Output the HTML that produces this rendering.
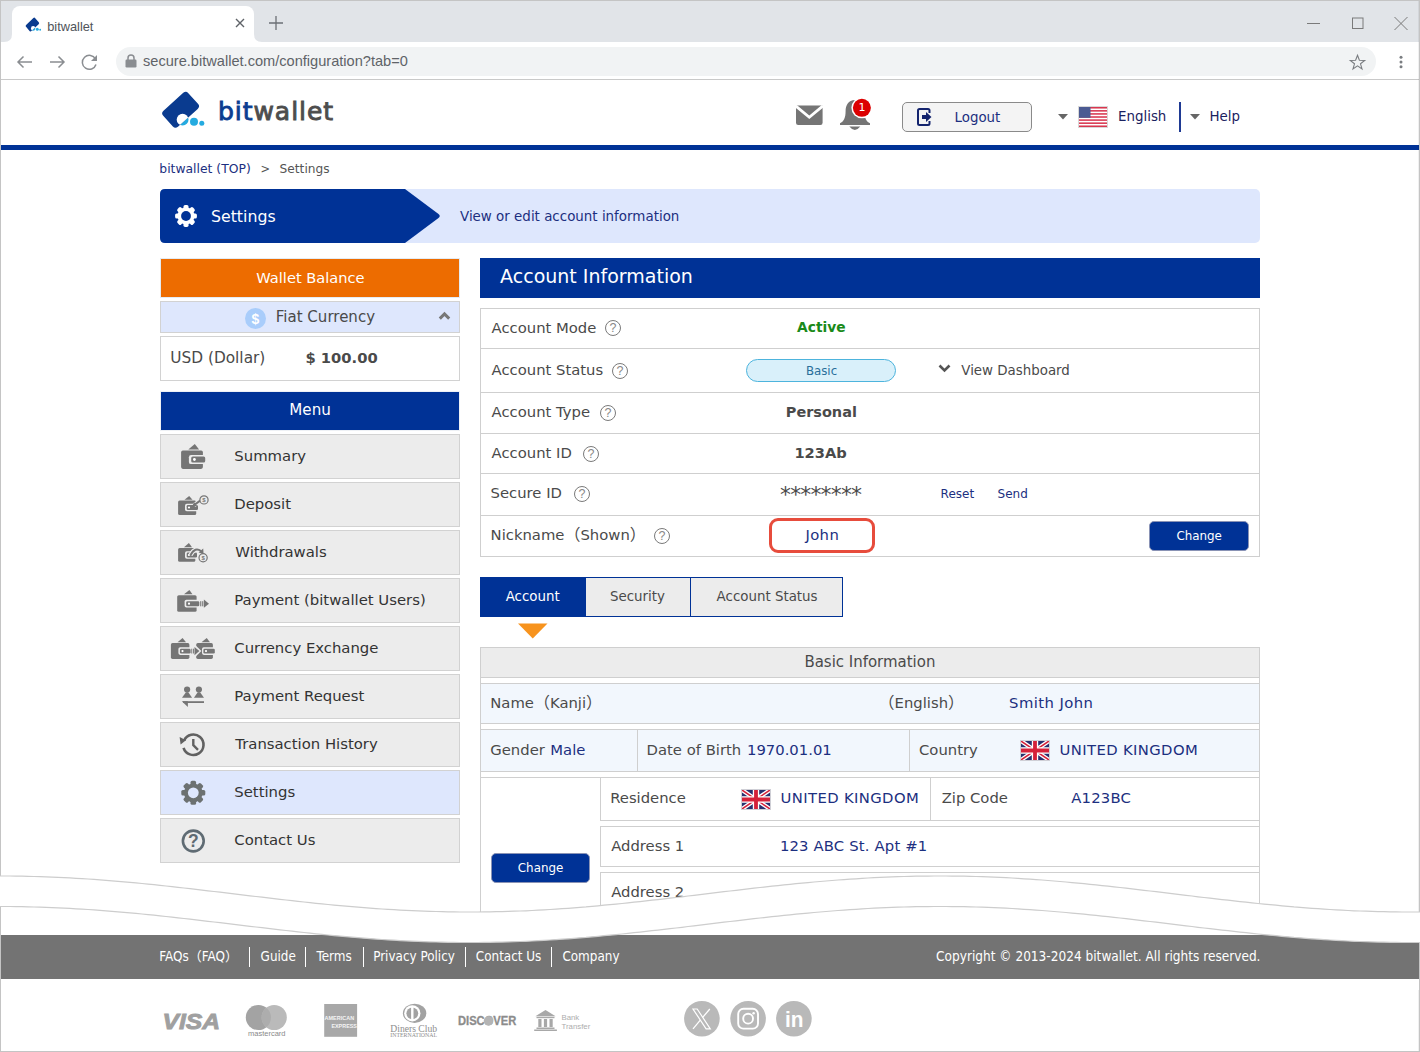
<!DOCTYPE html>
<html lang="en">
<head>
<meta charset="utf-8">
<title>bitwallet</title>
<style>
*{box-sizing:border-box;margin:0;padding:0}
html,body{width:1420px;height:1052px;overflow:hidden;background:#fff}
body{position:relative;font-family:"DejaVu Sans","Liberation Sans","Noto Sans CJK JP",sans-serif;color:#4a4a4a;font-size:16px}
.a{position:absolute}
.t{position:absolute;white-space:nowrap;line-height:20px;height:20px}
.ui{font-family:"Liberation Sans","Noto Sans CJK JP",sans-serif}
.navy{color:#1c2f80}
.blue{background:#003296}
svg{position:absolute;display:block;overflow:visible}
/* chrome frame */
#tabbar{left:0;top:0;width:1420px;height:42px;background:#e1e4e8}
#tab{left:12px;top:6px;width:242px;height:36px;background:#fff;border-radius:8px 8px 0 0}
#toolbar{left:0;top:42px;width:1420px;height:38px;background:#fff;border-bottom:1px solid #c9c9c9}
#pill{left:116px;top:47px;width:1260px;height:29px;border-radius:15px;background:#f1f3f4}
#frame{left:0;top:0;width:1420px;height:1052px;border:1px solid #c4c4c4;z-index:4;pointer-events:none;box-shadow:inset -1px 0 0 rgba(0,0,0,0.06)}
/* header */
#hline{left:1px;top:145px;width:1418px;height:5px}
#logout{left:902px;top:102px;width:130px;height:30px;border:1px solid #8a8a8a;border-radius:5px;background:#f4f4f4}
/* banner */
#banner{left:160px;top:189px;width:1100px;height:54px;background:#dee7fd;border-radius:5px}
/* sidebar */
.box{position:absolute;left:160px;width:300px;border:1px solid #d2d2d2}
.mi{position:absolute;left:160px;width:300px;height:45px;border:1px solid #d2d2d2;background:#ececec}
.mt{color:#333}
.fw{font-family:"Noto Sans CJK JP",sans-serif;font-size:16px;line-height:0}
/* main */
.row{position:absolute;left:480px;width:780px;border:1px solid #cfcfcf}
.lbl{font-size:14.8px;color:#4a4a4a}
.val{font-size:15.2px;color:#1c2f80}
.btn{position:absolute;background:#003296;border:1px solid #8a93b5;border-radius:5px;color:#fff;font-size:13.6px;text-align:center}
.q{position:absolute;width:16px;height:16px;border:1px solid #7a7a7a;border-radius:50%;font-size:12.5px;line-height:14px;text-align:center;color:#888;font-family:"Liberation Sans",sans-serif}
</style>
</head>
<body>
<!-- ===== browser chrome ===== -->
<div class="a" id="tabbar"></div>
<div class="a" id="tab"></div>
<svg style="left:4px;top:34px" width="260" height="8" viewBox="0 0 260 8"><path d="M0 8 Q8 8 8 0 L8 8 Z M250 0 Q250 8 258 8 L250 8 Z" fill="#fff"/></svg>
<div class="a" id="toolbar"></div>
<div class="a" id="pill"></div>
<!-- favicon -->
<svg style="left:22.700px;top:15.300px" width="22" height="19.300" viewBox="0 0 60 50" preserveAspectRatio="none"><defs><clipPath id="lc2"><rect x="-16.900" y="-10.800" width="33.800" height="21.600" rx="3.600" transform="translate(25.600 24.800) rotate(-42)"/></clipPath></defs><circle cx="27.600" cy="34.700" r="5.900" fill="#25abe0"/><rect x="-16.900" y="-10.800" width="33.800" height="21.600" rx="3.600" transform="translate(25.600 24.800) rotate(-42)" fill="#0a3b8f"/><circle cx="27.600" cy="34.700" r="5.900" fill="#fff" clip-path="url(#lc2)"/><circle cx="39" cy="36.800" r="4" fill="#25abe0"/><circle cx="46.800" cy="38.300" r="2.500" fill="#25abe0"/></svg>
<span id="t1" class="t ui" style="left:47.2px;top:17.0px;font-size:12.81px;color:#50545a">bitwallet</span>
<svg style="left:235px;top:18px" width="10" height="10" viewBox="0 0 10 10"><path d="M1 1 L9 9 M9 1 L1 9" stroke="#5f6368" stroke-width="1.4" fill="none"/></svg>
<svg style="left:269px;top:16px" width="14" height="14" viewBox="0 0 14 14"><path d="M7 0 V14 M0 7 H14" stroke="#6b6f75" stroke-width="1.3" fill="none"/></svg>
<!-- window controls -->
<svg style="left:1307px;top:16px" width="102" height="15" viewBox="0 0 102 15"><path d="M0 7.5 H13" stroke="#7a7a7a" stroke-width="1" fill="none"/><rect x="45.5" y="2" width="10.5" height="10.5" stroke="#7a7a7a" stroke-width="1" fill="none"/><path d="M87.5 1 L100.5 14 M100.5 1 L87.5 14" stroke="#7a7a7a" stroke-width="1" fill="none"/></svg>
<!-- nav buttons -->
<svg style="left:16px;top:54px" width="84" height="16" viewBox="0 0 84 16"><g stroke="#8a8d91" stroke-width="1.5" fill="none"><path d="M16 8 H2 M7.5 2.5 L2 8 L7.5 13.5"/><path d="M34 8 H48 M42.500 2.500 L48 8 L42.500 13.500"/><path d="M79.500 5 A7 7 0 1 0 80 10.500"/></g><path d="M81 1 V7 H75 Z" fill="#8a8d91"/></svg>
<!-- lock -->
<svg style="left:125px;top:54px" width="12" height="14" viewBox="0 0 12 14"><rect x="0.500" y="5.500" width="11" height="8" rx="1.200" fill="#8a8d91"/><path d="M3 6 V4 A3 3 0 0 1 9 4 V6" stroke="#8a8d91" stroke-width="1.500" fill="none"/></svg>
<span id="t2" class="t ui" style="left:143.0px;top:51.0px;font-size:14.60px;color:#5f6368">secure.bitwallet.com/configuration?tab=0</span>
<!-- star + dots -->
<svg style="left:1349px;top:54px" width="17" height="16" viewBox="0 0 17 16"><path d="M8.500 1.300 L10.400 6.300 L15.700 6.500 L11.500 9.800 L13 14.900 L8.500 11.900 L4 14.900 L5.500 9.800 L1.300 6.500 L6.600 6.300 Z" stroke="#7a7d81" stroke-width="1.100" fill="none" stroke-linejoin="miter"/></svg>
<svg style="left:1399px;top:55px" width="4" height="14" viewBox="0 0 4 14"><circle cx="2" cy="2.300" r="1.500" fill="#7a7d81"/><circle cx="2" cy="7" r="1.500" fill="#7a7d81"/><circle cx="2" cy="11.700" r="1.500" fill="#7a7d81"/></svg>

<!-- ===== site header ===== -->
<svg style="left:155px;top:85px" width="60" height="50" viewBox="0 0 60 50"><defs><clipPath id="lc1"><rect x="-16.900" y="-10.800" width="33.800" height="21.600" rx="3.600" transform="translate(25.600 24.800) rotate(-42)"/></clipPath></defs><circle cx="27.600" cy="34.700" r="5.900" fill="#25abe0"/><rect x="-16.900" y="-10.800" width="33.800" height="21.600" rx="3.600" transform="translate(25.600 24.800) rotate(-42)" fill="#0a3b8f"/><circle cx="27.600" cy="34.700" r="5.900" fill="#fff" clip-path="url(#lc1)"/><circle cx="39" cy="36.800" r="4" fill="#25abe0"/><circle cx="46.800" cy="38.300" r="2.500" fill="#25abe0"/></svg>
<span id="t3" class="t ui" style="left:218.0px;top:97.0px;height:30px;line-height:30px;font-size:25px;font-family:'DejaVu Sans',sans-serif;-webkit-text-stroke-width:0.9px;letter-spacing:0.95px;color:#4d4d4d"><span style="color:#0b3d91">bit</span>wallet</span>
<!-- mail -->
<svg style="left:790px;top:92px" width="90" height="45" viewBox="790 92 90 45"><path d="M796 105.600 H822.600 V122.800 Q822.600 125 820.400 125 H798.200 Q796 125 796 122.800 Z" fill="#757575"/><path d="M795.600 105.900 L809.300 117.300 L823 105.900" stroke="#fff" stroke-width="2.800" fill="none"/><path d="M855 99.900 C848.200 99.900 845.600 105.500 845.600 111 C845.600 118 843.600 121.600 840 123.300 L840 125 L870 125 L870 123.300 C866.400 121.600 864.400 118 864.400 111 C864.400 105.500 861.800 99.900 855 99.900 Z" fill="#757575"/><path d="M849.300 126.600 H860.300 Q854.800 133.400 849.300 126.600 Z" fill="#757575"/><circle cx="861.900" cy="107.800" r="10.500" fill="#fff"/><circle cx="861.900" cy="107.800" r="9" fill="#dc0000"/></svg>
<!-- bell (drawn with mail) -->
<span id="t4" class="t ui" style="left:857.900px;top:99px;width:8px;text-align:center;font-size:11px;color:#fff;line-height:18px;height:18px;font-family:'DejaVu Sans',sans-serif">1</span>
<!-- logout -->
<div class="a" id="logout"></div>
<svg style="left:917px;top:108px" width="15" height="18" viewBox="0 0 15 18"><path d="M12.500 5 V2.500 Q12.500 1 11 1 H2.500 Q1 1 1 2.500 V15.500 Q1 17 2.500 17 H11 Q12.500 17 12.500 15.500 V13" stroke="#14246e" stroke-width="2" fill="none"/><path d="M5 7 H9 V4 L14.500 9 L9 14 V11 H5 Z" fill="#14246e"/></svg>
<span id="t5" class="t navy" style="left:954.5px;top:108.0px;font-size:13.40px">Logout</span>
<!-- lang / help -->
<svg style="left:1058px;top:114px" width="10" height="6" viewBox="0 0 10 6"><path d="M0 0 H10 L5 5.500 Z" fill="#666"/></svg>
<svg style="left:1078px;top:106px" width="30" height="22" viewBox="0 0 30 22"><rect x="0" y="0" width="30" height="22" fill="#d8d8d8"/><rect x="1" y="1" width="28" height="20" fill="#fff"/><g fill="#d8364f"><rect x="1" y="1" width="28" height="1.540"/><rect x="1" y="4.080" width="28" height="1.540"/><rect x="1" y="7.160" width="28" height="1.540"/><rect x="1" y="10.240" width="28" height="1.540"/><rect x="1" y="13.320" width="28" height="1.540"/><rect x="1" y="16.400" width="28" height="1.540"/><rect x="1" y="19.460" width="28" height="1.540"/></g><rect x="1" y="1" width="11.500" height="10.800" fill="#4b5a92"/></svg>
<span id="t6" class="t" style="left:1118.0px;top:107.0px;font-size:13.40px;color:#1a2260">English</span>
<div class="a" style="left:1179px;top:102px;width:1.500px;height:30px;background:#1f3a93"></div>
<svg style="left:1190px;top:114px" width="10" height="6" viewBox="0 0 10 6"><path d="M0 0 H10 L5 5.500 Z" fill="#666"/></svg>
<span id="t7" class="t" style="left:1209.4px;top:107.0px;font-size:13.40px;color:#1a2260">Help</span>
<div class="a blue" id="hline"></div>

<!-- breadcrumb -->
<span id="t8" class="t navy" style="left:159.3px;top:159.0px;font-size:12.37px">bitwallet (TOP)</span>
<span id="t9" class="t" style="left:260.6px;top:159.0px;font-size:11.41px;color:#555">&gt;</span>
<span id="t10" class="t" style="left:279.6px;top:159.0px;font-size:12.20px;color:#555">Settings</span>

<!-- banner -->
<div class="a" id="banner"></div>
<svg style="left:160px;top:189px" width="282" height="54" viewBox="0 0 282 54"><path d="M5 0 H245 L278.500 25 Q281 27 278.500 29 L245 54 H5 Q0 54 0 49 V5 Q0 0 5 0 Z" fill="#003296"/></svg>
<svg style="left:172px;top:202px" width="28" height="28" viewBox="171.5 202 28 28"><circle cx="185.50" cy="216.00" r="8.50" fill="#fff"/><rect x="182.95" y="205.10" width="5.10" height="4.90" rx="1.60" fill="#fff" transform="rotate(0 185.50 216.00)"/><rect x="182.95" y="205.10" width="5.10" height="4.90" rx="1.60" fill="#fff" transform="rotate(45 185.50 216.00)"/><rect x="182.95" y="205.10" width="5.10" height="4.90" rx="1.60" fill="#fff" transform="rotate(90 185.50 216.00)"/><rect x="182.95" y="205.10" width="5.10" height="4.90" rx="1.60" fill="#fff" transform="rotate(135 185.50 216.00)"/><rect x="182.95" y="205.10" width="5.10" height="4.90" rx="1.60" fill="#fff" transform="rotate(180 185.50 216.00)"/><rect x="182.95" y="205.10" width="5.10" height="4.90" rx="1.60" fill="#fff" transform="rotate(225 185.50 216.00)"/><rect x="182.95" y="205.10" width="5.10" height="4.90" rx="1.60" fill="#fff" transform="rotate(270 185.50 216.00)"/><rect x="182.95" y="205.10" width="5.10" height="4.90" rx="1.60" fill="#fff" transform="rotate(315 185.50 216.00)"/><circle cx="185.50" cy="216.00" r="4.90" fill="#003296"/></svg>
<span id="t11" class="t" style="left:211.0px;top:206.0px;font-size:15.75px;color:#fff;line-height:22px;height:22px">Settings</span>
<span id="t12" class="t navy" style="left:460.0px;top:207.0px;font-size:13.43px">View or edit account information</span>

<!-- ===== sidebar ===== -->
<div class="box" style="top:258px;height:40px;border-color:#e4ebf3;background:#ed6c00"></div>
<span id="t13" class="t" style="left:256.3px;top:268.0px;font-size:14.64px;color:#fff">Wallet Balance</span>
<div class="box" style="top:301px;height:32px;background:#dee7fd"></div>
<svg style="left:245px;top:308px" width="21" height="21" viewBox="0 0 21 21"><circle cx="10.500" cy="10.500" r="10.500" fill="#a9cdfb"/></svg>
<span id="t14" class="t ui" style="left:245px;width:21px;text-align:center;top:309px;font-size:14px;font-weight:bold;color:#fff">$</span>
<span id="t15" class="t" style="left:275.8px;top:307.0px;font-size:15.02px;color:#4a4a4a">Fiat Currency</span>
<svg style="left:438px;top:311px" width="13" height="9" viewBox="0 0 13 9"><path d="M1.800 7.600 L6.500 2.900 L11.200 7.600" stroke="#777" stroke-width="3" fill="none"/></svg>
<div class="box" style="top:336px;height:45px;background:#fff"></div>
<span id="t16" class="t" style="left:170.2px;top:348.0px;font-size:15.37px;color:#4a4a4a">USD (Dollar)</span>
<span id="t17" class="t" style="left:305.4px;top:348.0px;font-size:14.74px;color:#4a4a4a;font-weight:bold;font-family:'DejaVu Sans','Liberation Sans',sans-serif">$ 100.00</span>
<div class="box blue" style="top:391px;height:40px;border-color:#eef1f5"></div>
<span id="t18" class="t" style="left:289.3px;top:400.0px;font-size:15.12px;color:#fff">Menu</span>
<div class="mi" style="top:434px"></div><span id="t19" class="t mt" style="left:234.3px;top:446.0px;font-size:14.85px">Summary</span>
<div class="mi" style="top:482px"></div><span id="t20" class="t mt" style="left:234.3px;top:494.0px;font-size:14.85px">Deposit</span>
<div class="mi" style="top:530px"></div><span id="t21" class="t mt" style="left:235.3px;top:542.0px;font-size:14.85px">Withdrawals</span>
<div class="mi" style="top:578px"></div><span id="t22" class="t mt" style="left:234.3px;top:590.0px;font-size:14.85px">Payment (bitwallet Users)</span>
<div class="mi" style="top:626px"></div><span id="t23" class="t mt" style="left:234.3px;top:638.0px;font-size:14.85px">Currency Exchange</span>
<div class="mi" style="top:674px"></div><span id="t24" class="t mt" style="left:234.3px;top:686.0px;font-size:14.85px">Payment Request</span>
<div class="mi" style="top:722px"></div><span id="t25" class="t mt" style="left:235.3px;top:734.0px;font-size:14.85px">Transaction History</span>
<div class="mi" style="top:770px;background:#dee7fd"></div><span id="t26" class="t mt" style="left:234.3px;top:782.0px;font-size:14.85px">Settings</span>
<div class="mi" style="top:818px"></div><span id="t27" class="t mt" style="left:234.3px;top:830.0px;font-size:14.85px">Contact Us</span>
<svg style="left:160px;top:434px" width="60" height="430" viewBox="160 434 60 430"><rect x="181.10" y="450.40" width="21.80" height="18.50" rx="1.80" fill="#757575"/><polygon points="188.30,449.60 194.80,443.90 199.10,449.60" fill="#757575"/><rect x="188.90" y="455.00" width="17.10" height="9.10" rx="2.20" fill="#ececec"/><rect x="191.20" y="456.50" width="14.00" height="6.00" rx="1.60" fill="#757575"/><circle cx="194.40" cy="459.50" r="1.40" fill="#fff"/><rect x="178.10" y="500.50" width="18.10" height="14.40" rx="1.50" fill="#757575"/><polygon points="184.50,499.70 189.20,496.00 192.50,499.70" fill="#757575"/><rect x="185.00" y="503.80" width="14.50" height="7.40" rx="1.80" fill="#ececec"/><rect x="186.70" y="505.00" width="11.30" height="5.00" rx="1.30" fill="#757575"/><circle cx="189.00" cy="507.50" r="1.10" fill="#fff"/><path d="M200.2 500.6 L194 505.2" stroke="#ececec" stroke-width="4.2" fill="none"/><path d="M200.2 500.6 L195.2 504.3" stroke="#757575" stroke-width="2" fill="none"/><polygon points="192.20,506.60 194.00,502.00 197.30,506.00" fill="#757575"/><circle cx="204" cy="499.9" r="4.1" fill="#ececec" stroke="#757575" stroke-width="1.2"/><text x="204" y="502.1" font-family="Liberation Sans,sans-serif" font-size="6" font-weight="bold" fill="#757575" text-anchor="middle">$</text><rect x="178.10" y="548.10" width="17.20" height="13.70" rx="1.50" fill="#757575"/><polygon points="184.00,547.30 188.90,543.10 192.00,547.30" fill="#757575"/><rect x="185.00" y="551.30" width="13.50" height="7.40" rx="1.80" fill="#ececec"/><rect x="186.70" y="552.50" width="10.30" height="5.00" rx="1.30" fill="#757575"/><circle cx="188.90" cy="555.00" r="1.10" fill="#fff"/><path d="M190.5 555 Q195 546.5 201.5 551.5" stroke="#ececec" stroke-width="4.4" fill="none"/><path d="M190.5 555 Q195 546.5 201 551" stroke="#757575" stroke-width="2" fill="none"/><polygon points="198.60,552.60 203.20,548.60 203.60,554.00" fill="#757575"/><circle cx="203.1" cy="557.8" r="4.1" fill="#ececec" stroke="#757575" stroke-width="1.2"/><text x="203.1" y="560" font-family="Liberation Sans,sans-serif" font-size="6" font-weight="bold" fill="#757575" text-anchor="middle">$</text><rect x="177.20" y="595.20" width="19.40" height="16.60" rx="1.60" fill="#757575"/><polygon points="184.00,594.30 189.40,590.10 192.50,594.30" fill="#757575"/><rect x="184.60" y="599.80" width="19.40" height="7.80" rx="1.80" fill="#ececec"/><rect x="186.20" y="601.20" width="13.10" height="5.10" rx="1.30" fill="#757575"/><circle cx="189.00" cy="603.70" r="1.10" fill="#fff"/><rect x="200.20" y="601.20" width="1.10" height="5.10" rx="0.00" fill="#757575"/><rect x="202.20" y="601.20" width="1.10" height="5.10" rx="0.00" fill="#757575"/><polygon points="203.90,599.50 209.00,603.70 203.90,607.80" fill="#757575"/><rect x="170.90" y="643.10" width="18.50" height="15.80" rx="1.60" fill="#757575"/><polygon points="177.50,642.30 182.60,638.10 186.00,642.30" fill="#757575"/><rect x="196.20" y="643.10" width="16.70" height="15.80" rx="1.60" fill="#757575"/><polygon points="201.50,642.30 206.70,638.10 210.00,642.30" fill="#757575"/><polygon points="194.80,644.60 201.40,651.10 194.80,657.60" fill="#ececec"/><rect x="178.40" y="647.30" width="16.10" height="7.60" rx="1.80" fill="#ececec"/><rect x="179.90" y="648.70" width="10.70" height="4.80" rx="1.30" fill="#757575"/><circle cx="182.50" cy="651.10" r="1.10" fill="#fff"/><rect x="191.30" y="648.70" width="0.90" height="4.80" rx="0.00" fill="#757575"/><rect x="193.00" y="648.70" width="0.90" height="4.80" rx="0.00" fill="#757575"/><polygon points="194.50,646.90 199.40,651.10 194.50,655.30" fill="#757575"/><rect x="202.00" y="647.30" width="14.00" height="7.60" rx="1.80" fill="#ececec"/><rect x="203.40" y="648.70" width="11.40" height="4.80" rx="1.30" fill="#757575"/><circle cx="206.00" cy="651.10" r="1.10" fill="#fff"/><circle cx="187.10" cy="689.60" r="3.10" fill="#757575"/><circle cx="198.90" cy="689.60" r="3.10" fill="#757575"/><path d="M182 697.8 L185.4 693 Q187.1 691.6 188.8 693 L192.1 697.8 Z" fill="#757575"/><path d="M193.9 697.8 L197.2 693 Q198.9 691.6 200.6 693 L204 697.8 Z" fill="#757575"/><rect x="183.00" y="701.20" width="21.00" height="1.80" rx="0.00" fill="#757575"/><polygon points="181.80,701.20 187.90,701.20 187.90,706.90" fill="#757575"/><path d="M184.06 740.49 A10.2 10.2 0 1 1 183.55 747.78" stroke="#616161" stroke-width="2.6" fill="none"/><polygon points="179.60,737.00 186.00,740.20 180.60,744.60" fill="#616161"/><path d="M193.3 739 V745.2 L198 749.8" stroke="#616161" stroke-width="2.4" fill="none" stroke-linejoin="round"/><circle cx="193.30" cy="792.80" r="9.40" fill="#6c7171"/><rect x="190.50" y="780.80" width="5.60" height="6.00" rx="1.60" fill="#6c7171" transform="rotate(0 193.30 792.80)"/><rect x="190.50" y="780.80" width="5.60" height="6.00" rx="1.60" fill="#6c7171" transform="rotate(45 193.30 792.80)"/><rect x="190.50" y="780.80" width="5.60" height="6.00" rx="1.60" fill="#6c7171" transform="rotate(90 193.30 792.80)"/><rect x="190.50" y="780.80" width="5.60" height="6.00" rx="1.60" fill="#6c7171" transform="rotate(135 193.30 792.80)"/><rect x="190.50" y="780.80" width="5.60" height="6.00" rx="1.60" fill="#6c7171" transform="rotate(180 193.30 792.80)"/><rect x="190.50" y="780.80" width="5.60" height="6.00" rx="1.60" fill="#6c7171" transform="rotate(225 193.30 792.80)"/><rect x="190.50" y="780.80" width="5.60" height="6.00" rx="1.60" fill="#6c7171" transform="rotate(270 193.30 792.80)"/><rect x="190.50" y="780.80" width="5.60" height="6.00" rx="1.60" fill="#6c7171" transform="rotate(315 193.30 792.80)"/><circle cx="193.30" cy="792.80" r="5.40" fill="#dee7fd"/><circle cx="193.3" cy="841" r="10.4" fill="none" stroke="#5f6b73" stroke-width="2.6"/><text x="193.3" y="847.3" font-family="Liberation Sans,sans-serif" font-size="17.5" font-weight="bold" fill="#5f6b73" text-anchor="middle">?</text></svg>
<!--ICONS-END-->

<!-- ===== main ===== -->
<div class="a blue" style="left:480px;top:258px;width:780px;height:40px"></div>
<span id="t28" class="t" style="left:500.1px;top:263.0px;font-size:19.00px;color:#fff;line-height:26px;height:26px">Account Information</span>
<div class="row" style="top:308px;height:249px;background:#fff"></div>
<div class="a" style="left:481px;top:348px;width:778px;height:1px;background:#cfcfcf"></div>
<div class="a" style="left:481px;top:392px;width:778px;height:1px;background:#cfcfcf"></div>
<div class="a" style="left:481px;top:433px;width:778px;height:1px;background:#cfcfcf"></div>
<div class="a" style="left:481px;top:473px;width:778px;height:1px;background:#cfcfcf"></div>
<div class="a" style="left:481px;top:515px;width:778px;height:1px;background:#cfcfcf"></div>
<span id="t29" class="t lbl" style="left:491.6px;top:318.0px;font-size:14.80px">Account Mode</span><div class="q" style="left:605px;top:320px">?</div>
<span id="t30" class="t lbl" style="left:491.6px;top:360.0px;font-size:14.80px">Account Status</span><div class="q" style="left:612px;top:363px">?</div>
<span id="t31" class="t lbl" style="left:491.6px;top:402.0px;font-size:14.80px">Account Type</span><div class="q" style="left:600px;top:405px">?</div>
<span id="t32" class="t lbl" style="left:491.6px;top:443.0px;font-size:14.80px">Account ID</span><div class="q" style="left:583px;top:446px">?</div>
<span id="t33" class="t lbl" style="left:490.6px;top:483.0px;font-size:14.80px">Secure ID</span><div class="q" style="left:574px;top:486px">?</div>
<span id="t34" class="t lbl" style="left:490.6px;top:525.0px">Nickname<span class="fw">（</span>Shown<span class="fw">）</span></span><div class="q" style="left:654px;top:528px">?</div>
<span id="t35" class="t" style="left:797.1px;top:317.0px;font-size:13.82px;font-weight:bold;color:#1a8a1a;font-family:'DejaVu Sans','Liberation Sans',sans-serif">Active</span>
<div class="a" style="left:746px;top:359px;width:150px;height:23px;border:1px solid #4db4dd;border-radius:12px;background:#d9f0fa"></div>
<span id="t36" class="t" style="left:805.9px;top:361.0px;font-size:11.81px;color:#2a6f9a">Basic</span>
<svg style="left:938px;top:364px" width="13" height="10" viewBox="0 0 13 10"><path d="M1.500 1.500 L6.500 6.500 L11.500 1.500" stroke="#555" stroke-width="2.600" fill="none"/></svg>
<span id="t37" class="t" style="left:961.3px;top:361.0px;font-size:13.38px;color:#4a4a4a">View Dashboard</span>
<span id="t38" class="t" style="left:785.8px;top:402.0px;font-size:14.46px;font-weight:bold;color:#4a4a4a;font-family:'DejaVu Sans','Liberation Sans',sans-serif">Personal</span>
<span id="t39" class="t" style="left:794.4px;top:443.0px;font-size:14.65px;font-weight:bold;color:#4a4a4a;font-family:'DejaVu Sans','Liberation Sans',sans-serif">123Ab</span>
<span id="t40" class="t" style="left:780px;top:484.5px;font-size:22px;color:#4a4a4a;letter-spacing:-0.85px">********</span>
<span id="t41" class="t navy" style="left:940.6px;top:484.0px;font-size:12.00px">Reset</span>
<span id="t42" class="t navy" style="left:997.6px;top:484.0px;font-size:12.00px">Send</span>
<div class="a" style="left:769px;top:518px;width:106px;height:35px;border:3px solid #e74c3c;border-radius:9px"></div>
<span id="t43" class="t val" style="left:805.4px;top:525.0px;font-size:14.8px;letter-spacing:0.40px">John</span>
<div class="btn" style="left:1149px;top:521px;width:100px;height:30px"></div><span id="t71" class="t" style="left:1176.4px;top:526.0px;font-size:11.9px;color:#fff">Change</span>
<!-- tabs -->
<div class="a blue" style="left:480px;top:577px;width:106px;height:40px"></div>
<span id="t44" class="t" style="left:505.7px;top:587.0px;font-size:13.40px;color:#fff">Account</span>
<div class="a" style="left:585px;top:577px;width:106px;height:40px;border:1px solid #003296;background:#ececec"></div>
<span id="t45" class="t" style="left:610.0px;top:587.0px;font-size:13.40px;color:#4a4a4a">Security</span>
<div class="a" style="left:690px;top:577px;width:153px;height:40px;border:1px solid #003296;background:#ececec"></div>
<span id="t46" class="t" style="left:716.6px;top:587.0px;font-size:13.40px;color:#4a4a4a">Account Status</span>
<svg style="left:518px;top:623px" width="30" height="16" viewBox="0 0 30 16"><path d="M0 0.500 H29.500 L14.750 15.500 Z" fill="#f7931e"/></svg>
<!-- basic information -->
<div class="a" style="left:480px;top:647px;width:780px;height:270px;border-left:1px solid #cfcfcf;border-right:1px solid #cfcfcf"></div>
<div class="row" style="top:647px;height:31px;background:#ececec"></div>
<span id="t47" class="t" style="left:804.4px;top:652.0px;font-size:14.98px;color:#4a4a4a">Basic Information</span>
<div class="row" style="top:683px;height:41px;background:#f2f7fd"></div>
<span id="t48" class="t lbl" style="left:490.3px;top:693.0px">Name<span class="fw">（</span>Kanji<span class="fw">）</span></span>
<span id="t49" class="t lbl" style="left:878.6px;top:693.0px"><span class="fw">（</span>English<span class="fw">）</span></span>
<span id="t50" class="t val" style="left:1009.1px;top:693.0px;font-size:14.8px;letter-spacing:0.42px">Smith John</span>
<div class="row" style="top:729px;height:43px;background:#f2f7fd"></div>
<div class="a" style="left:637px;top:730px;width:1px;height:41px;background:#cfcfcf"></div>
<div class="a" style="left:909px;top:730px;width:1px;height:41px;background:#cfcfcf"></div>
<span id="t51" class="t lbl" style="left:490.3px;top:740.0px;font-size:14.80px">Gender</span>
<span id="t52" class="t val" style="left:550.3px;top:740.0px;font-size:14.8px">Male</span>
<span id="t53" class="t lbl" style="left:646.6px;top:740.0px;font-size:14.80px">Date of Birth</span>
<span id="t54" class="t val" style="left:747.0px;top:740.0px;font-size:14.8px">1970.01.01</span>
<span id="t55" class="t lbl" style="left:919.0px;top:740.0px;font-size:14.80px">Country</span>
<span id="t56" class="t val" style="left:1059.6px;top:740.0px;font-size:14.8px;letter-spacing:0.38px">UNITED KINGDOM</span>
<div class="a" style="left:480px;top:777px;width:780px;height:1px;background:#cfcfcf"></div>
<div class="a" style="left:600px;top:777px;width:659px;height:44px;border:1px solid #cfcfcf;border-right:none"></div>
<div class="a" style="left:930px;top:778px;width:1px;height:42px;background:#cfcfcf"></div>
<span id="t57" class="t lbl" style="left:610.2px;top:788.0px;font-size:14.80px">Residence</span>
<span id="t58" class="t val" style="left:780.6px;top:788.0px;font-size:14.8px;letter-spacing:0.38px">UNITED KINGDOM</span>
<span id="t59" class="t lbl" style="left:941.7px;top:788.0px;font-size:14.80px">Zip Code</span>
<span id="t60" class="t val" style="left:1071.3px;top:788.0px;font-size:14.8px;letter-spacing:0.20px">A123BC</span>
<div class="a" style="left:600px;top:826px;width:659px;height:41px;border:1px solid #cfcfcf;border-right:none"></div>
<span id="t61" class="t lbl" style="left:611.2px;top:836.0px;font-size:14.80px">Address 1</span>
<span id="t62" class="t val" style="left:779.9px;top:836.0px;font-size:14.8px;letter-spacing:0.17px">123 ABC St. Apt #1</span>
<div class="a" style="left:600px;top:872px;width:659px;height:45px;border:1px solid #cfcfcf;border-right:none"></div>
<span id="t63" class="t lbl" style="left:611.2px;top:882.0px;font-size:14.80px">Address 2</span>
<div class="btn" style="left:491px;top:853px;width:99px;height:30px"></div><span id="t72" class="t" style="left:517.8px;top:858.0px;font-size:11.9px;color:#fff">Change</span>
<svg style="left:1020px;top:740px" width="30" height="21" viewBox="0 0 30 21"><defs><clipPath id="uk1"><rect x="1" y="1" width="28" height="19"/></clipPath></defs><rect width="30" height="21" fill="#cfcfd6"/><g clip-path="url(#uk1)"><rect x="1" y="1" width="28" height="19" fill="#27306f"/><path d="M1 1 L29 20 M29 1 L1 20" stroke="#fff" stroke-width="4.200"/><path d="M1 1 L29 20 M29 1 L1 20" stroke="#d5213a" stroke-width="1.500"/><path d="M15 1 V20 M1 10.500 H29" stroke="#fff" stroke-width="6.400"/><path d="M15 1 V20 M1 10.500 H29" stroke="#d5213a" stroke-width="3.800"/></g></svg>
<svg style="left:741px;top:789px" width="30" height="21" viewBox="0 0 30 21"><defs><clipPath id="uk2"><rect x="1" y="1" width="28" height="19"/></clipPath></defs><rect width="30" height="21" fill="#cfcfd6"/><g clip-path="url(#uk2)"><rect x="1" y="1" width="28" height="19" fill="#27306f"/><path d="M1 1 L29 20 M29 1 L1 20" stroke="#fff" stroke-width="4.200"/><path d="M1 1 L29 20 M29 1 L1 20" stroke="#d5213a" stroke-width="1.500"/><path d="M15 1 V20 M1 10.500 H29" stroke="#fff" stroke-width="6.400"/><path d="M15 1 V20 M1 10.500 H29" stroke="#d5213a" stroke-width="3.800"/></g></svg>

<!-- ===== footer / wave ===== -->
<svg style="left:0;top:860px;z-index:5" width="1420" height="192" viewBox="0 0 1420 192">
<path d="M-2 16.0 L4 16.0 L10 16.0 L16 16.1 L22 16.2 L28 16.3 L34 16.5 L40 16.6 L46 16.8 L52 17.1 L58 17.3 L64 17.6 L70 17.9 L76 18.3 L82 18.6 L88 19.0 L94 19.4 L100 19.9 L106 20.3 L112 20.8 L118 21.3 L124 21.8 L130 22.4 L136 22.9 L142 23.5 L148 24.1 L154 24.7 L160 25.3 L166 26.0 L172 26.6 L178 27.3 L184 28.0 L190 28.7 L196 29.4 L202 30.1 L208 30.8 L214 31.5 L220 32.2 L226 32.9 L232 33.6 L238 34.4 L244 35.1 L250 35.8 L256 36.5 L262 37.2 L268 37.9 L274 38.6 L280 39.3 L286 40.0 L292 40.7 L298 41.4 L304 42.0 L310 42.7 L316 43.3 L322 43.9 L328 44.5 L334 45.1 L340 45.6 L346 46.2 L352 46.7 L358 47.2 L364 47.7 L370 48.1 L376 48.6 L382 49.0 L388 49.4 L394 49.7 L400 50.1 L406 50.4 L412 50.7 L418 50.9 L424 51.2 L430 51.4 L436 51.5 L442 51.7 L448 51.8 L454 51.9 L460 52.0 L466 52.0 L472 52.0 L478 52.0 L484 51.9 L490 51.8 L496 51.7 L502 51.6 L508 51.4 L514 51.2 L520 51.0 L526 50.8 L532 50.5 L538 50.2 L544 49.8 L550 49.5 L556 49.1 L562 48.7 L568 48.3 L574 47.8 L580 47.3 L586 46.9 L592 46.3 L598 45.8 L604 45.2 L610 44.7 L616 44.1 L622 43.5 L628 42.9 L634 42.2 L640 41.6 L646 40.9 L652 40.2 L658 39.6 L664 38.9 L670 38.2 L676 37.5 L682 36.8 L688 36.0 L694 35.3 L700 34.6 L706 33.9 L712 33.2 L718 32.4 L724 31.7 L730 31.0 L736 30.3 L742 29.6 L748 28.9 L754 28.2 L760 27.5 L766 26.9 L772 26.2 L778 25.6 L784 24.9 L790 24.3 L796 23.7 L802 23.1 L808 22.6 L814 22.0 L820 21.5 L826 21.0 L832 20.5 L838 20.0 L844 19.6 L850 19.2 L856 18.8 L862 18.4 L868 18.0 L874 17.7 L880 17.4 L886 17.2 L892 16.9 L898 16.7 L904 16.5 L910 16.4 L916 16.2 L922 16.1 L928 16.1 L934 16.0 L940 16.0 L946 16.0 L952 16.1 L958 16.1 L964 16.2 L970 16.4 L976 16.5 L982 16.7 L988 16.9 L994 17.2 L1000 17.4 L1006 17.7 L1012 18.0 L1018 18.4 L1024 18.8 L1030 19.2 L1036 19.6 L1042 20.0 L1048 20.5 L1054 21.0 L1060 21.5 L1066 22.0 L1072 22.6 L1078 23.1 L1084 23.7 L1090 24.3 L1096 24.9 L1102 25.6 L1108 26.2 L1114 26.9 L1120 27.5 L1126 28.2 L1132 28.9 L1138 29.6 L1144 30.3 L1150 31.0 L1156 31.7 L1162 32.4 L1168 33.2 L1174 33.9 L1180 34.6 L1186 35.3 L1192 36.0 L1198 36.8 L1204 37.5 L1210 38.2 L1216 38.9 L1222 39.6 L1228 40.2 L1234 40.9 L1240 41.6 L1246 42.2 L1252 42.9 L1258 43.5 L1264 44.1 L1270 44.7 L1276 45.2 L1282 45.8 L1288 46.3 L1294 46.9 L1300 47.3 L1306 47.8 L1312 48.3 L1318 48.7 L1324 49.1 L1330 49.5 L1336 49.8 L1342 50.2 L1348 50.5 L1354 50.8 L1360 51.0 L1366 51.2 L1372 51.4 L1378 51.6 L1384 51.7 L1390 51.8 L1396 51.9 L1402 52.0 L1408 52.0 L1414 52.0 L1420 52.0 L1424 130 L-2 130 Z" fill="#fff"/>
<rect x="0" y="75" width="1420" height="44" fill="#737373"/>
<rect x="0" y="46" width="1" height="146" fill="#c4c4c4"/><rect x="1419" y="46" width="1" height="146" fill="#c4c4c4"/>
<path d="M-2 16.0 L4 16.0 L10 16.0 L16 16.1 L22 16.2 L28 16.3 L34 16.5 L40 16.6 L46 16.8 L52 17.1 L58 17.3 L64 17.6 L70 17.9 L76 18.3 L82 18.6 L88 19.0 L94 19.4 L100 19.9 L106 20.3 L112 20.8 L118 21.3 L124 21.8 L130 22.4 L136 22.9 L142 23.5 L148 24.1 L154 24.7 L160 25.3 L166 26.0 L172 26.6 L178 27.3 L184 28.0 L190 28.7 L196 29.4 L202 30.1 L208 30.8 L214 31.5 L220 32.2 L226 32.9 L232 33.6 L238 34.4 L244 35.1 L250 35.8 L256 36.5 L262 37.2 L268 37.9 L274 38.6 L280 39.3 L286 40.0 L292 40.7 L298 41.4 L304 42.0 L310 42.7 L316 43.3 L322 43.9 L328 44.5 L334 45.1 L340 45.6 L346 46.2 L352 46.7 L358 47.2 L364 47.7 L370 48.1 L376 48.6 L382 49.0 L388 49.4 L394 49.7 L400 50.1 L406 50.4 L412 50.7 L418 50.9 L424 51.2 L430 51.4 L436 51.5 L442 51.7 L448 51.8 L454 51.9 L460 52.0 L466 52.0 L472 52.0 L478 52.0 L484 51.9 L490 51.8 L496 51.7 L502 51.6 L508 51.4 L514 51.2 L520 51.0 L526 50.8 L532 50.5 L538 50.2 L544 49.8 L550 49.5 L556 49.1 L562 48.7 L568 48.3 L574 47.8 L580 47.3 L586 46.9 L592 46.3 L598 45.8 L604 45.2 L610 44.7 L616 44.1 L622 43.5 L628 42.9 L634 42.2 L640 41.6 L646 40.9 L652 40.2 L658 39.6 L664 38.9 L670 38.2 L676 37.5 L682 36.8 L688 36.0 L694 35.3 L700 34.6 L706 33.9 L712 33.2 L718 32.4 L724 31.7 L730 31.0 L736 30.3 L742 29.6 L748 28.9 L754 28.2 L760 27.5 L766 26.9 L772 26.2 L778 25.6 L784 24.9 L790 24.3 L796 23.7 L802 23.1 L808 22.6 L814 22.0 L820 21.5 L826 21.0 L832 20.5 L838 20.0 L844 19.6 L850 19.2 L856 18.8 L862 18.4 L868 18.0 L874 17.7 L880 17.4 L886 17.2 L892 16.9 L898 16.7 L904 16.5 L910 16.4 L916 16.2 L922 16.1 L928 16.1 L934 16.0 L940 16.0 L946 16.0 L952 16.1 L958 16.1 L964 16.2 L970 16.4 L976 16.5 L982 16.7 L988 16.9 L994 17.2 L1000 17.4 L1006 17.7 L1012 18.0 L1018 18.4 L1024 18.8 L1030 19.2 L1036 19.6 L1042 20.0 L1048 20.5 L1054 21.0 L1060 21.5 L1066 22.0 L1072 22.6 L1078 23.1 L1084 23.7 L1090 24.3 L1096 24.9 L1102 25.6 L1108 26.2 L1114 26.9 L1120 27.5 L1126 28.2 L1132 28.9 L1138 29.6 L1144 30.3 L1150 31.0 L1156 31.7 L1162 32.4 L1168 33.2 L1174 33.9 L1180 34.6 L1186 35.3 L1192 36.0 L1198 36.8 L1204 37.5 L1210 38.2 L1216 38.9 L1222 39.6 L1228 40.2 L1234 40.9 L1240 41.6 L1246 42.2 L1252 42.9 L1258 43.5 L1264 44.1 L1270 44.7 L1276 45.2 L1282 45.8 L1288 46.3 L1294 46.9 L1300 47.3 L1306 47.8 L1312 48.3 L1318 48.7 L1324 49.1 L1330 49.5 L1336 49.8 L1342 50.2 L1348 50.5 L1354 50.8 L1360 51.0 L1366 51.2 L1372 51.4 L1378 51.6 L1384 51.7 L1390 51.8 L1396 51.9 L1402 52.0 L1408 52.0 L1414 52.0 L1420 52.0 L1420 82.5 L1414 82.5 L1408 82.5 L1402 82.5 L1396 82.4 L1390 82.3 L1384 82.2 L1378 82.1 L1372 81.9 L1366 81.7 L1360 81.5 L1354 81.3 L1348 81.0 L1342 80.7 L1336 80.3 L1330 80.0 L1324 79.6 L1318 79.2 L1312 78.8 L1306 78.3 L1300 77.8 L1294 77.4 L1288 76.8 L1282 76.3 L1276 75.7 L1270 75.2 L1264 74.6 L1258 74.0 L1252 73.4 L1246 72.7 L1240 72.1 L1234 71.4 L1228 70.7 L1222 70.1 L1216 69.4 L1210 68.7 L1204 68.0 L1198 67.3 L1192 66.5 L1186 65.8 L1180 65.1 L1174 64.4 L1168 63.7 L1162 62.9 L1156 62.2 L1150 61.5 L1144 60.8 L1138 60.1 L1132 59.4 L1126 58.7 L1120 58.0 L1114 57.4 L1108 56.7 L1102 56.1 L1096 55.4 L1090 54.8 L1084 54.2 L1078 53.6 L1072 53.1 L1066 52.5 L1060 52.0 L1054 51.5 L1048 51.0 L1042 50.5 L1036 50.1 L1030 49.7 L1024 49.3 L1018 48.9 L1012 48.5 L1006 48.2 L1000 47.9 L994 47.7 L988 47.4 L982 47.2 L976 47.0 L970 46.9 L964 46.7 L958 46.6 L952 46.6 L946 46.5 L940 46.5 L934 46.5 L928 46.6 L922 46.6 L916 46.7 L910 46.9 L904 47.0 L898 47.2 L892 47.4 L886 47.7 L880 47.9 L874 48.2 L868 48.5 L862 48.9 L856 49.3 L850 49.7 L844 50.1 L838 50.5 L832 51.0 L826 51.5 L820 52.0 L814 52.5 L808 53.1 L802 53.6 L796 54.2 L790 54.8 L784 55.4 L778 56.1 L772 56.7 L766 57.4 L760 58.0 L754 58.7 L748 59.4 L742 60.1 L736 60.8 L730 61.5 L724 62.2 L718 62.9 L712 63.7 L706 64.4 L700 65.1 L694 65.8 L688 66.5 L682 67.3 L676 68.0 L670 68.7 L664 69.4 L658 70.1 L652 70.7 L646 71.4 L640 72.1 L634 72.7 L628 73.4 L622 74.0 L616 74.6 L610 75.2 L604 75.7 L598 76.3 L592 76.8 L586 77.4 L580 77.8 L574 78.3 L568 78.8 L562 79.2 L556 79.6 L550 80.0 L544 80.3 L538 80.7 L532 81.0 L526 81.3 L520 81.5 L514 81.7 L508 81.9 L502 82.1 L496 82.2 L490 82.3 L484 82.4 L478 82.5 L472 82.5 L466 82.5 L460 82.5 L454 82.4 L448 82.3 L442 82.2 L436 82.0 L430 81.9 L424 81.7 L418 81.4 L412 81.2 L406 80.9 L400 80.6 L394 80.2 L388 79.9 L382 79.5 L376 79.1 L370 78.6 L364 78.2 L358 77.7 L352 77.2 L346 76.7 L340 76.1 L334 75.6 L328 75.0 L322 74.4 L316 73.8 L310 73.2 L304 72.5 L298 71.9 L292 71.2 L286 70.5 L280 69.8 L274 69.1 L268 68.4 L262 67.7 L256 67.0 L250 66.3 L244 65.6 L238 64.9 L232 64.1 L226 63.4 L220 62.7 L214 62.0 L208 61.3 L202 60.6 L196 59.9 L190 59.2 L184 58.5 L178 57.8 L172 57.1 L166 56.5 L160 55.8 L154 55.2 L148 54.6 L142 54.0 L136 53.4 L130 52.9 L124 52.3 L118 51.8 L112 51.3 L106 50.8 L100 50.4 L94 49.9 L88 49.5 L82 49.1 L76 48.8 L70 48.4 L64 48.1 L58 47.8 L52 47.6 L46 47.3 L40 47.1 L34 47.0 L28 46.8 L22 46.7 L16 46.6 L10 46.5 L4 46.5 L-2 46.5 Z" fill="#fff"/>
<path d="M-2 16.0 L4 16.0 L10 16.0 L16 16.1 L22 16.2 L28 16.3 L34 16.5 L40 16.6 L46 16.8 L52 17.1 L58 17.3 L64 17.6 L70 17.9 L76 18.3 L82 18.6 L88 19.0 L94 19.4 L100 19.9 L106 20.3 L112 20.8 L118 21.3 L124 21.8 L130 22.4 L136 22.9 L142 23.5 L148 24.1 L154 24.7 L160 25.3 L166 26.0 L172 26.6 L178 27.3 L184 28.0 L190 28.7 L196 29.4 L202 30.1 L208 30.8 L214 31.5 L220 32.2 L226 32.9 L232 33.6 L238 34.4 L244 35.1 L250 35.8 L256 36.5 L262 37.2 L268 37.9 L274 38.6 L280 39.3 L286 40.0 L292 40.7 L298 41.4 L304 42.0 L310 42.7 L316 43.3 L322 43.9 L328 44.5 L334 45.1 L340 45.6 L346 46.2 L352 46.7 L358 47.2 L364 47.7 L370 48.1 L376 48.6 L382 49.0 L388 49.4 L394 49.7 L400 50.1 L406 50.4 L412 50.7 L418 50.9 L424 51.2 L430 51.4 L436 51.5 L442 51.7 L448 51.8 L454 51.9 L460 52.0 L466 52.0 L472 52.0 L478 52.0 L484 51.9 L490 51.8 L496 51.7 L502 51.6 L508 51.4 L514 51.2 L520 51.0 L526 50.8 L532 50.5 L538 50.2 L544 49.8 L550 49.5 L556 49.1 L562 48.7 L568 48.3 L574 47.8 L580 47.3 L586 46.9 L592 46.3 L598 45.8 L604 45.2 L610 44.7 L616 44.1 L622 43.5 L628 42.9 L634 42.2 L640 41.6 L646 40.9 L652 40.2 L658 39.6 L664 38.9 L670 38.2 L676 37.5 L682 36.8 L688 36.0 L694 35.3 L700 34.6 L706 33.9 L712 33.2 L718 32.4 L724 31.7 L730 31.0 L736 30.3 L742 29.6 L748 28.9 L754 28.2 L760 27.5 L766 26.9 L772 26.2 L778 25.6 L784 24.9 L790 24.3 L796 23.7 L802 23.1 L808 22.6 L814 22.0 L820 21.5 L826 21.0 L832 20.5 L838 20.0 L844 19.6 L850 19.2 L856 18.8 L862 18.4 L868 18.0 L874 17.7 L880 17.4 L886 17.2 L892 16.9 L898 16.7 L904 16.5 L910 16.4 L916 16.2 L922 16.1 L928 16.1 L934 16.0 L940 16.0 L946 16.0 L952 16.1 L958 16.1 L964 16.2 L970 16.4 L976 16.5 L982 16.7 L988 16.9 L994 17.2 L1000 17.4 L1006 17.7 L1012 18.0 L1018 18.4 L1024 18.8 L1030 19.2 L1036 19.6 L1042 20.0 L1048 20.5 L1054 21.0 L1060 21.5 L1066 22.0 L1072 22.6 L1078 23.1 L1084 23.7 L1090 24.3 L1096 24.9 L1102 25.6 L1108 26.2 L1114 26.9 L1120 27.5 L1126 28.2 L1132 28.9 L1138 29.6 L1144 30.3 L1150 31.0 L1156 31.7 L1162 32.4 L1168 33.2 L1174 33.9 L1180 34.6 L1186 35.3 L1192 36.0 L1198 36.8 L1204 37.5 L1210 38.2 L1216 38.9 L1222 39.6 L1228 40.2 L1234 40.9 L1240 41.6 L1246 42.2 L1252 42.9 L1258 43.5 L1264 44.1 L1270 44.7 L1276 45.2 L1282 45.8 L1288 46.3 L1294 46.9 L1300 47.3 L1306 47.8 L1312 48.3 L1318 48.7 L1324 49.1 L1330 49.5 L1336 49.8 L1342 50.2 L1348 50.5 L1354 50.8 L1360 51.0 L1366 51.2 L1372 51.4 L1378 51.6 L1384 51.7 L1390 51.8 L1396 51.9 L1402 52.0 L1408 52.0 L1414 52.0 L1420 52.0" fill="none" stroke="#cdcdcd" stroke-width="1.200"/>
<path d="M-2 46.5 L4 46.5 L10 46.5 L16 46.6 L22 46.7 L28 46.8 L34 47.0 L40 47.1 L46 47.3 L52 47.6 L58 47.8 L64 48.1 L70 48.4 L76 48.8 L82 49.1 L88 49.5 L94 49.9 L100 50.4 L106 50.8 L112 51.3 L118 51.8 L124 52.3 L130 52.9 L136 53.4 L142 54.0 L148 54.6 L154 55.2 L160 55.8 L166 56.5 L172 57.1 L178 57.8 L184 58.5 L190 59.2 L196 59.9 L202 60.6 L208 61.3 L214 62.0 L220 62.7 L226 63.4 L232 64.1 L238 64.9 L244 65.6 L250 66.3 L256 67.0 L262 67.7 L268 68.4 L274 69.1 L280 69.8 L286 70.5 L292 71.2 L298 71.9 L304 72.5 L310 73.2 L316 73.8 L322 74.4 L328 75.0 L334 75.6 L340 76.1 L346 76.7 L352 77.2 L358 77.7 L364 78.2 L370 78.6 L376 79.1 L382 79.5 L388 79.9 L394 80.2 L400 80.6 L406 80.9 L412 81.2 L418 81.4 L424 81.7 L430 81.9 L436 82.0 L442 82.2 L448 82.3 L454 82.4 L460 82.5 L466 82.5 L472 82.5 L478 82.5 L484 82.4 L490 82.3 L496 82.2 L502 82.1 L508 81.9 L514 81.7 L520 81.5 L526 81.3 L532 81.0 L538 80.7 L544 80.3 L550 80.0 L556 79.6 L562 79.2 L568 78.8 L574 78.3 L580 77.8 L586 77.4 L592 76.8 L598 76.3 L604 75.7 L610 75.2 L616 74.6 L622 74.0 L628 73.4 L634 72.7 L640 72.1 L646 71.4 L652 70.7 L658 70.1 L664 69.4 L670 68.7 L676 68.0 L682 67.3 L688 66.5 L694 65.8 L700 65.1 L706 64.4 L712 63.7 L718 62.9 L724 62.2 L730 61.5 L736 60.8 L742 60.1 L748 59.4 L754 58.7 L760 58.0 L766 57.4 L772 56.7 L778 56.1 L784 55.4 L790 54.8 L796 54.2 L802 53.6 L808 53.1 L814 52.5 L820 52.0 L826 51.5 L832 51.0 L838 50.5 L844 50.1 L850 49.7 L856 49.3 L862 48.9 L868 48.5 L874 48.2 L880 47.9 L886 47.7 L892 47.4 L898 47.2 L904 47.0 L910 46.9 L916 46.7 L922 46.6 L928 46.6 L934 46.5 L940 46.5 L946 46.5 L952 46.6 L958 46.6 L964 46.7 L970 46.9 L976 47.0 L982 47.2 L988 47.4 L994 47.7 L1000 47.9 L1006 48.2 L1012 48.5 L1018 48.9 L1024 49.3 L1030 49.7 L1036 50.1 L1042 50.5 L1048 51.0 L1054 51.5 L1060 52.0 L1066 52.5 L1072 53.1 L1078 53.6 L1084 54.2 L1090 54.8 L1096 55.4 L1102 56.1 L1108 56.7 L1114 57.4 L1120 58.0 L1126 58.7 L1132 59.4 L1138 60.1 L1144 60.8 L1150 61.5 L1156 62.2 L1162 62.9 L1168 63.7 L1174 64.4 L1180 65.1 L1186 65.8 L1192 66.5 L1198 67.3 L1204 68.0 L1210 68.7 L1216 69.4 L1222 70.1 L1228 70.7 L1234 71.4 L1240 72.1 L1246 72.7 L1252 73.4 L1258 74.0 L1264 74.6 L1270 75.2 L1276 75.7 L1282 76.3 L1288 76.8 L1294 77.4 L1300 77.8 L1306 78.3 L1312 78.8 L1318 79.2 L1324 79.6 L1330 80.0 L1336 80.3 L1342 80.7 L1348 81.0 L1354 81.3 L1360 81.5 L1366 81.7 L1372 81.9 L1378 82.1 L1384 82.2 L1390 82.3 L1396 82.4 L1402 82.5 L1408 82.5 L1414 82.5 L1420 82.5" fill="none" stroke="#cdcdcd" stroke-width="1.200"/>
</svg>
<div class="a" style="left:0;top:0;width:1420px;height:1052px;z-index:6;font-family:'DejaVu Sans Condensed','Liberation Sans','Noto Sans CJK JP',sans-serif">
<span id="t64" class="t" style="left:159.3px;top:947.0px;font-size:13.400px;color:#fff">FAQs<span class="fw" style="font-size:13px">（</span>FAQ<span class="fw" style="font-size:13px">）</span></span>
<span id="t65" class="t" style="left:260.6px;top:947.0px;font-size:13.35px;color:#fff">Guide</span>
<span id="t66" class="t" style="left:316.6px;top:947.0px;font-size:13.35px;color:#fff">Terms</span>
<span id="t67" class="t" style="left:373.2px;top:947.0px;font-size:13.35px;color:#fff">Privacy Policy</span>
<span id="t68" class="t" style="left:475.8px;top:947.0px;font-size:13.35px;color:#fff">Contact Us</span>
<span id="t69" class="t" style="left:562.4px;top:947.0px;font-size:13.35px;color:#fff">Company</span>
<div class="a" style="left:249px;top:947px;width:1px;height:20px;background:#fff"></div>
<div class="a" style="left:305px;top:947px;width:1px;height:20px;background:#fff"></div>
<div class="a" style="left:363px;top:947px;width:1px;height:20px;background:#fff"></div>
<div class="a" style="left:465px;top:947px;width:1px;height:20px;background:#fff"></div>
<div class="a" style="left:551px;top:947px;width:1px;height:20px;background:#fff"></div>
<span id="t70" class="t" style="left:936.1px;top:946.0px;font-size:13.53px;color:#fff">Copyright © 2013-2024 bitwallet. All rights reserved.</span>
<svg style="left:160px;top:995px" width="680" height="55" viewBox="160 995 680 55">
<text x="162.500" y="1029.400" font-family="Liberation Sans,sans-serif" font-size="22.500" font-weight="bold" font-style="italic" fill="#a0a0a0" stroke="#a0a0a0" stroke-width="0.900" textLength="57.500" lengthAdjust="spacingAndGlyphs">VISA</text>
<circle cx="258.400" cy="1017.500" r="12.600" fill="#a3a3a3"/><circle cx="274.200" cy="1017.500" r="12.600" fill="#bababa"/><path d="M266.300 1007.700 A12.600 12.600 0 0 1 266.300 1027.300 A12.600 12.600 0 0 1 266.300 1007.700 Z" fill="#adadad"/>
<text x="248" y="1036.400" font-family="Liberation Sans,sans-serif" font-size="7.800" fill="#8a8a8a" textLength="37.500" lengthAdjust="spacingAndGlyphs">mastercard</text>
<rect x="324.200" y="1004" width="32.900" height="32.800" fill="#a8a8a8"/>
<text x="324.600" y="1019.800" font-family="Liberation Sans,sans-serif" font-size="5.600" font-weight="bold" fill="#f4f4f4" textLength="29.500" lengthAdjust="spacingAndGlyphs">AMERICAN</text>
<text x="331.400" y="1027.600" font-family="Liberation Sans,sans-serif" font-size="5.600" font-weight="bold" fill="#f4f4f4" textLength="25.600" lengthAdjust="spacingAndGlyphs">EXPRESS</text>
<ellipse cx="414.600" cy="1013.300" rx="11.700" ry="9.600" fill="#a2a2a2"/><circle cx="412.300" cy="1013.300" r="8.100" fill="#fff"/><circle cx="412.300" cy="1013.300" r="5.900" fill="#a2a2a2"/><rect x="411.100" y="1006.500" width="2.400" height="13.600" fill="#fff"/>
<text x="390.300" y="1031.900" font-family="Liberation Serif,serif" font-size="11.400" fill="#8e8e8e" textLength="46.800" lengthAdjust="spacingAndGlyphs">Diners Club</text>
<text x="390.300" y="1037.200" font-family="Liberation Serif,serif" font-size="5.200" fill="#8e8e8e" textLength="46.800" lengthAdjust="spacingAndGlyphs">INTERNATIONAL</text>
<text x="458" y="1025.200" font-family="Liberation Sans,sans-serif" font-size="11.900" font-weight="bold" fill="#8c8c8c" stroke="#8c8c8c" stroke-width="0.300" textLength="58.300" lengthAdjust="spacingAndGlyphs">DISC<tspan fill="#b4b4b4">O</tspan>VER</text>
<circle cx="488.400" cy="1021" r="4.700" fill="#b4b4b4"/>
<g fill="#a8a8a8"><polygon points="545.500,1010 555.600,1016.300 535.400,1016.300"/><rect x="536.500" y="1016.800" width="18" height="1.400"/><rect x="538.300" y="1019" width="3.200" height="8"/><rect x="543.900" y="1019" width="3.200" height="8"/><rect x="549.500" y="1019" width="3.200" height="8"/><rect x="536.500" y="1027.500" width="18" height="1.500"/><rect x="534.200" y="1029.500" width="22.700" height="1.500"/></g>
<text x="561.500" y="1020" font-family="Liberation Sans,sans-serif" font-size="7.800" fill="#adadad">Bank</text>
<text x="561.500" y="1028.700" font-family="Liberation Sans,sans-serif" font-size="7.800" fill="#adadad">Transfer</text>
<circle cx="701.900" cy="1018.700" r="17.800" fill="#b9b9b9"/>
<path d="M693 1009 H697.200 L710.300 1028.800 H706.100 Z" fill="none" stroke="#fff" stroke-width="1.200"/><path d="M709.800 1009 L702.700 1017.300 M700.300 1020.200 L693 1028.800" stroke="#fff" stroke-width="1.300" fill="none"/>
<circle cx="748.100" cy="1018.700" r="17.800" fill="#b9b9b9"/>
<rect x="738.200" y="1008.800" width="19.800" height="19.800" rx="5.200" fill="none" stroke="#fff" stroke-width="1.900"/><circle cx="748.100" cy="1018.700" r="4.900" fill="none" stroke="#fff" stroke-width="1.900"/><circle cx="753.600" cy="1013.200" r="1.250" fill="#fff"/>
<circle cx="793.900" cy="1018.700" r="17.800" fill="#b9b9b9"/>
<text x="785" y="1027" font-family="Liberation Sans,sans-serif" font-size="22" font-weight="bold" fill="#fff" textLength="18.500" lengthAdjust="spacingAndGlyphs">in</text>
</svg>
</div>

<div class="a" id="frame"></div>
</body>
</html>
